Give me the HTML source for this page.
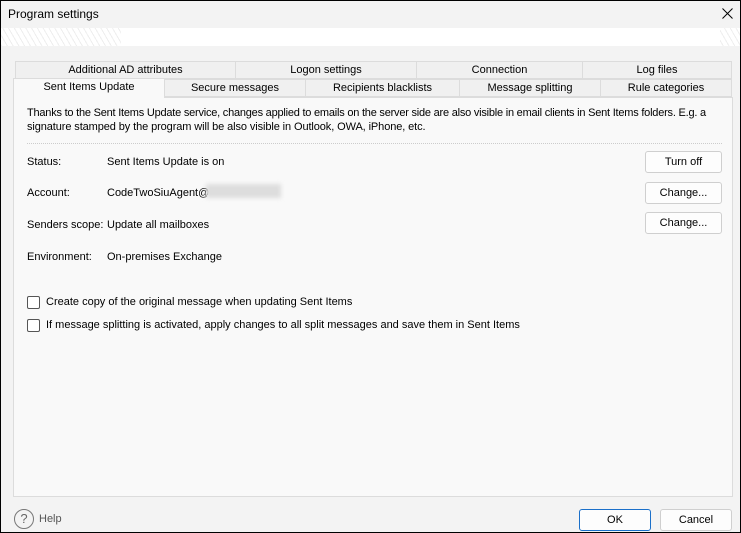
<!DOCTYPE html>
<html><head><meta charset="utf-8"><style>
*{box-sizing:border-box;margin:0;padding:0}
body{width:741px;height:533px;overflow:hidden;font-family:"Liberation Sans",sans-serif;font-size:11px;color:#000;background:#fff}
.win{position:absolute;left:0;top:0;width:741px;height:533px;border:1px solid #000;background:#f3f3f3}
.title{position:absolute;left:0;top:0;width:739px;height:27px;background:#f3f3f3}
.title span{position:absolute;left:7px;top:6px;font-size:12px}
.banner{position:absolute;left:0;top:27px;width:739px;height:18px;background:#fff;
 background-image:repeating-linear-gradient(60deg,#eeeeee 0 1px,transparent 1px 5px);}
.banner::after{content:"";position:absolute;left:120px;right:20px;top:0;bottom:0;background:#fff}
.tab{position:absolute;height:18px;border:1px solid #dcdcdc;background:#f0f0f0;text-align:center;line-height:16px;font-size:11px}
.sel{background:#f9f9f9;border-bottom:none;height:20px;top:77px!important;line-height:16px}
.panel{position:absolute;left:12px;top:96px;width:720px;height:400px;background:#f9f9f9;border:1px solid #dcdcdc}
.t{position:absolute;font-size:11px;white-space:nowrap}
.btn{position:absolute;left:644px;width:77px;height:22px;border:1px solid #cfcfcf;border-radius:3px;background:#fdfdfd;text-align:center;line-height:20px;font-size:11px}
.cb{position:absolute;left:26px;width:13px;height:13px;border:1px solid #555;border-radius:2px;background:#fff}
.blur{position:absolute;left:205px;top:183px;width:75px;height:14px;background:#ddd;filter:blur(2px)}
</style></head><body><div class="win">
<div class="title"><span>Program settings</span>
<svg style="position:absolute;right:7px;top:7px" width="11" height="11" viewBox="0 0 11 11"><path d="M0.5 0.5L10.5 10.5M10.5 0.5L0.5 10.5" stroke="#000" stroke-width="1"/></svg></div>
<div class="banner"></div>
<div class="tab" style="left:14px;top:60px;width:221px">Additional AD attributes</div>
<div class="tab" style="left:234px;top:60px;width:182px">Logon settings</div>
<div class="tab" style="left:415px;top:60px;width:167px">Connection</div>
<div class="tab" style="left:581px;top:60px;width:150px">Log files</div>
<div class="tab" style="left:163px;top:78px;width:142px">Secure messages</div>
<div class="tab" style="left:304px;top:78px;width:155px">Recipients blacklists</div>
<div class="tab" style="left:458px;top:78px;width:142px">Message splitting</div>
<div class="tab" style="left:599px;top:78px;width:132px">Rule categories</div>
<div class="panel"></div>
<div class="tab sel" style="left:12px;width:152px;z-index:2">Sent Items Update</div>
<div class="t" style="left:26px;top:106px;letter-spacing:-0.22px">Thanks to the Sent Items Update service, changes applied to emails on the server side are also visible in email clients in Sent Items folders. E.g. a</div>
<div class="t" style="left:26px;top:120px;letter-spacing:-0.1px">signature stamped by the program will be also visible in Outlook, OWA, iPhone, etc.</div>
<div style="position:absolute;left:26px;top:142px;width:695px;border-top:1px dotted #ccc"></div>
<div class="t" style="left:26px;top:155px">Status:</div><div class="t" style="left:106px;top:155px">Sent Items Update is on</div>
<div class="t" style="left:26px;top:186px">Account:</div><div class="t" style="left:106px;top:186px">CodeTwoSiuAgent@</div><div class="blur"></div>
<div class="t" style="left:26px;top:218px">Senders scope:</div><div class="t" style="left:106px;top:218px">Update all mailboxes</div>
<div class="t" style="left:26px;top:250px">Environment:</div><div class="t" style="left:106px;top:250px">On-premises Exchange</div>
<div class="btn" style="top:150px">Turn off</div>
<div class="btn" style="top:181px">Change...</div>
<div class="btn" style="top:211px">Change...</div>
<div class="cb" style="top:295px"></div><div class="t" style="left:45px;top:295px">Create copy of the original message when updating Sent Items</div>
<div class="cb" style="top:318px"></div><div class="t" style="left:45px;top:318px">If message splitting is activated, apply changes to all split messages and save them in Sent Items</div>
<div style="position:absolute;left:13px;top:508px;width:20px;height:20px;border:1.5px solid #777;border-radius:50%;text-align:center;line-height:17px;color:#666;font-size:13px">?</div>
<div class="t" style="left:38px;top:512px;color:#555">Help</div>
<div class="btn" style="left:578px;top:508px;width:72px;border:1px solid #1a6fc9;background:#fdfdfd">OK</div>
<div class="btn" style="left:659px;top:508px;width:72px">Cancel</div>
</div></body></html>
